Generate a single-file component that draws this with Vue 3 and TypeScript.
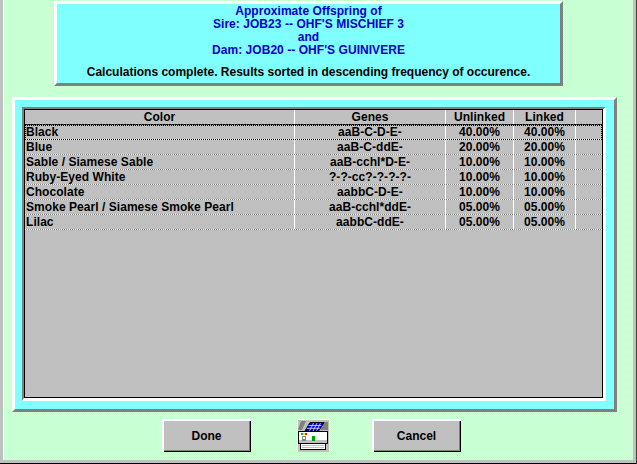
<script setup lang="ts">
interface Row { color: string; genes: string; unlinked: string; linked: string }
const rows: Row[] = [
  { color: 'Black', genes: 'aaB-C-D-E-', unlinked: '40.00%', linked: '40.00%' },
  { color: 'Blue', genes: 'aaB-C-ddE-', unlinked: '20.00%', linked: '20.00%' },
  { color: 'Sable / Siamese Sable', genes: 'aaB-cchl*D-E-', unlinked: '10.00%', linked: '10.00%' },
  { color: 'Ruby-Eyed White', genes: '?-?-cc?-?-?-?-', unlinked: '10.00%', linked: '10.00%' },
  { color: 'Chocolate', genes: 'aabbC-D-E-', unlinked: '10.00%', linked: '10.00%' },
  { color: 'Smoke Pearl / Siamese Smoke Pearl', genes: 'aaB-cchl*ddE-', unlinked: '05.00%', linked: '05.00%' },
  { color: 'Lilac', genes: 'aabbC-ddE-', unlinked: '05.00%', linked: '05.00%' },
]
</script>

<template>
  <div class="window">
    <div class="surface">
      <section class="summary">
        <p class="title">Approximate Offspring of</p>
        <p class="title">Sire: JOB23 -- OHF'S MISCHIEF 3</p>
        <p class="title">and</p>
        <p class="title">Dam: JOB20 -- OHF'S GUINIVERE</p>
        <p class="status">Calculations complete. Results sorted in descending frequency of occurence.</p>
      </section>

      <section class="panel">
        <div class="well">
          <div class="grid">
            <div class="row head">
              <span class="cell">Color</span>
              <span class="cell">Genes</span>
              <span class="cell">Unlinked</span>
              <span class="cell">Linked</span>
              <span class="cell"></span>
            </div>
            <div
              v-for="(r, i) in rows"
              :key="r.color"
              class="row"
              :class="{ focused: i === 0 }"
            >
              <span class="cell left">{{ r.color }}</span>
              <span class="cell">{{ r.genes }}</span>
              <span class="cell">{{ r.unlinked }}</span>
              <span class="cell">{{ r.linked }}</span>
              <span class="cell"></span>
            </div>
          </div>
        </div>
      </section>

      <div class="actions">
        <button class="btn" type="button">Done</button>
        <button class="print" type="button" aria-label="Print">
          <svg width="32" height="33" viewBox="0 0 32 33">
            <g shape-rendering="crispEdges">
              <rect x="0" y="0" width="32" height="33" fill="#c0c0c0" />
              <rect x="0" y="0" width="32" height="1" fill="#fff" />
              <rect x="0" y="0" width="1" height="33" fill="#fff" />
            </g>
            <polygon points="4,2 9,2 5,11 1,11" fill="#808080" />
            <polygon points="27,3 31,3 31,11 23,11" fill="#808080" />
            <polygon points="13,3.500 27,3.500 21.500,12 8,12" fill="#0000e8" stroke="#000" stroke-width="1" />
            <path d="M11.500 6.500h13M9.800 9.300h13M16.500 4l-4 8M20 4l-4 8M23.500 4l-4 8" stroke="#fff" stroke-width="0.7" fill="none" />
            <g shape-rendering="crispEdges">
              <rect x="1.500" y="12.500" width="29" height="12" fill="#fff" stroke="#000" stroke-width="1" />
              <rect x="2" y="21" width="28" height="3" fill="#c0c0c0" />
              <rect x="4" y="14" width="2" height="2" fill="#00c000" />
              <rect x="6" y="14" width="2" height="2" fill="#ffff00" />
              <rect x="8" y="14" width="2" height="2" fill="#ff0000" />
              <rect x="5" y="17" width="4" height="5" fill="#808080" />
              <rect x="6" y="18" width="2" height="2" fill="#fff" />
              <rect x="15" y="17" width="3" height="5" fill="#00a000" />
              <rect x="3.500" y="24.500" width="25" height="6" fill="#fff" stroke="#000" stroke-width="1" />
              <path d="M5 26.500h22M5 28.500h22" stroke="#c0c0c0" stroke-width="1" />
            </g>
          </svg>
        </button>
        <button class="btn" type="button">Cancel</button>
      </div>
    </div>
  </div>
</template>

<style>
html, body { margin: 0; padding: 0; background: #c0c0c0; }
</style>

<style scoped>
.window {
  box-sizing: border-box;
  width: 637px;
  height: 464px;
  border-right: 1px solid #404040;
  border-bottom: 1px solid #000;
  font-family: "Liberation Sans", Arial, sans-serif;
  font-weight: 700;
  font-size: 12px;
  color: #000;
}
.surface {
  box-sizing: border-box;
  height: 100%;
  border: solid #c0c0c0;
  border-width: 0 3px 3px 3px;
  box-shadow: inset 1px 0 #fff;
  padding-top: 1px;
  background: repeating-conic-gradient(#c4fccc 0 25%, #d6ffdc 0 50%) 0 0 / 2px 2px;
}
.summary {
  box-sizing: border-box;
  width: 509px;
  height: 85px;
  margin-left: 51px;
  padding-top: 1px;
  border: 3px solid;
  border-color: #fff #808080 #808080 #fff;
  background: #80ffff;
  text-align: center;
}
.summary p { margin: 0; line-height: 13px; letter-spacing: 0.05px; }
.title { color: #0000c8; }
.summary .status { margin-top: 9px; letter-spacing: 0; }
.panel {
  box-sizing: border-box;
  width: 605px;
  height: 315px;
  margin: 11px 0 0 9px;
  padding: 7px 8px 8px 7px;
  border: 3px solid;
  border-color: #fff #808080 #808080 #fff;
  background: #80ffff;
}
.well {
  box-sizing: border-box;
  height: 294px;
  border: solid;
  border-width: 2px 3px 3px 2px;
  border-color: #808080 #fff #fff #808080;
}
.grid {
  box-sizing: border-box;
  height: 100%;
  border: 1px solid #000;
  background: #c0c0c0;
}
.row {
  box-sizing: border-box;
  display: grid;
  grid-template-columns: 270px 151px 68px 62px 26px;
  height: 15px;
  background-image: repeating-linear-gradient(90deg, #fff 0 1px, #808080 1px 2px);
  background-size: 100% 1px;
  background-position: bottom;
  background-repeat: no-repeat;
  position: relative;
}
.row.head {
  background-image: repeating-linear-gradient(90deg, #000 0 2px, #404040 2px 3px);
}
.row.focused {
  background-image: repeating-linear-gradient(90deg, #000 0 1px, #fff 1px 2px);
  outline: 1px dotted #000;
  outline-offset: -1px;
}
.cell {
  line-height: 14px;
  height: 14px;
  text-align: center;
  border-right: 1px solid #fff;
  white-space: nowrap;
  overflow: hidden;
  letter-spacing: 0.05px;
}
.cell:last-child { border-right: 0; }
.cell.left { text-align: left; padding-left: 1px; }
.actions {
  display: flex;
  align-items: flex-start;
  margin: 7px 0 0 159px;
}
.btn {
  box-sizing: border-box;
  width: 89px;
  height: 33px;
  padding: 0;
  border: 0;
  background: #c0c0c0;
  box-shadow: inset 1px 1px #fff, inset 2px 2px #fff, inset -1px -1px #000, inset -2px -2px #808080;
  font: inherit;
  color: #000;
}
.print {
  width: 32px;
  height: 33px;
  padding: 0;
  border: 0;
  background: none;
  margin: 0 43px 0 46px;
  display: block;
}
.print svg { display: block; }
</style>
